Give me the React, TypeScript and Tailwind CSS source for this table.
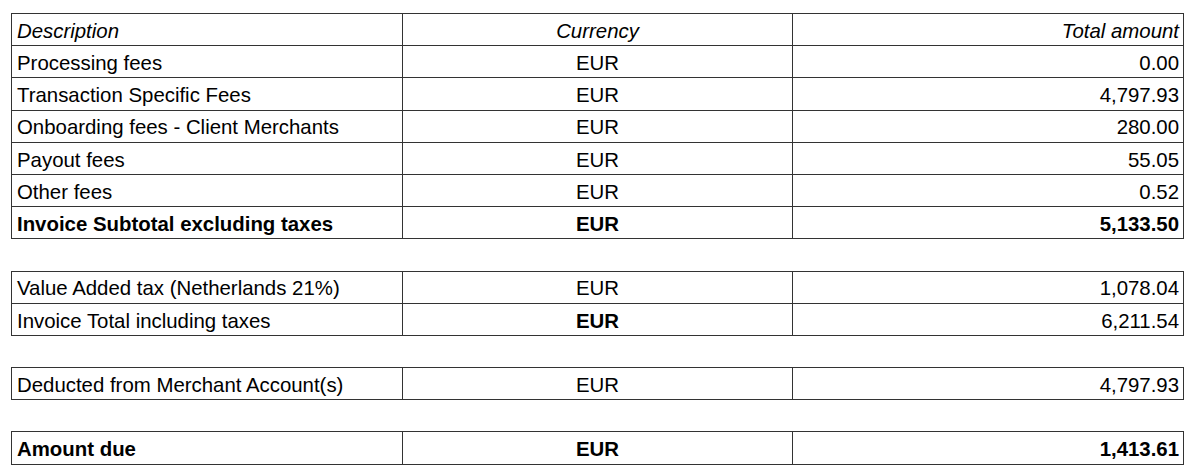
import React from "react";

type Row =
  | { spacer: true }
  | {
      spacer?: false;
      d: string;
      a: string;
      header?: boolean;
      bold?: boolean;
      boldCur?: boolean;
    };

const rows: Row[] = [
  { d: "Description", a: "Total amount", header: true },
  { d: "Processing fees", a: "0.00" },
  { d: "Transaction Specific Fees", a: "4,797.93" },
  { d: "Onboarding fees - Client Merchants", a: "280.00" },
  { d: "Payout fees", a: "55.05" },
  { d: "Other fees", a: "0.52" },
  { d: "Invoice Subtotal excluding taxes", a: "5,133.50", bold: true },
  { spacer: true },
  { d: "Value Added tax (Netherlands 21%)", a: "1,078.04" },
  { d: "Invoice Total including taxes", a: "6,211.54", boldCur: true },
  { spacer: true },
  { d: "Deducted from Merchant Account(s)", a: "4,797.93" },
  { spacer: true },
  { d: "Amount due", a: "1,413.61", bold: true },
];

export default function App() {
  return (
    <div className="bg-white w-[1198px] h-[476px] pt-[13px] pl-[11px] text-black font-['Liberation_Sans',Arial,sans-serif]">
      <table className="border-collapse table-fixed w-[1172px] text-[20.4px] leading-none">
        <colgroup>
          <col className="w-[391px]" />
          <col className="w-[390px]" />
          <col className="w-[391px]" />
        </colgroup>
        <tbody>
          {rows.map((r, i) =>
            r.spacer ? (
              <tr key={i} className="h-[32.2px]">
                <td colSpan={3} className="p-0" />
              </tr>
            ) : (
              <tr key={i} className="h-[32.2px]">
                <td
                  className={
                    "border border-[#333] px-[5px] pt-[3px] pb-0 align-middle text-left " +
                    (r.header ? "italic " : "") +
                    (r.bold ? "font-bold" : "")
                  }
                >
                  {r.d}
                </td>
                <td
                  className={
                    "border border-[#333] px-[5px] pt-[3px] pb-0 align-middle text-center " +
                    (r.header ? "italic " : "") +
                    (r.bold || r.boldCur ? "font-bold" : "")
                  }
                >
                  {r.header ? "Currency" : "EUR"}
                </td>
                <td
                  className={
                    "border border-[#333] px-[4px] pt-[3px] pb-0 align-middle text-right " +
                    (r.header ? "italic " : "") +
                    (r.bold ? "font-bold" : "")
                  }
                >
                  {r.a}
                </td>
              </tr>
            )
          )}
        </tbody>
      </table>
    </div>
  );
}
